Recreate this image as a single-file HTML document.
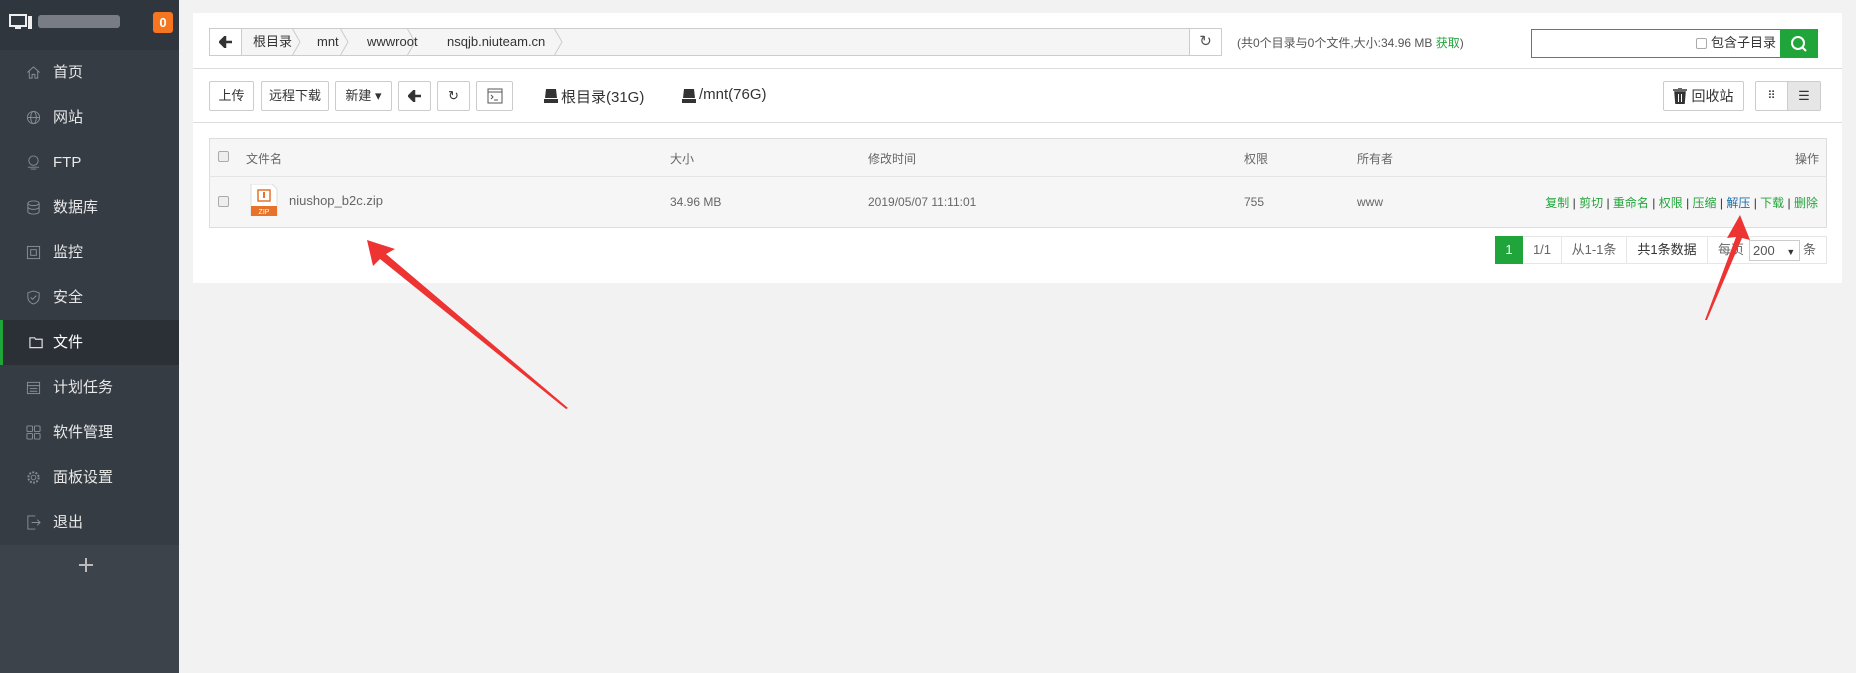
<!DOCTYPE html>
<html><head><meta charset="utf-8"><style>
*{box-sizing:border-box;margin:0;padding:0}
body{width:1856px;height:673px;background:#f2f2f2;font-family:"Liberation Sans","Noto Sans CJK SC",sans-serif;position:relative;overflow:hidden;color:#555}
.side{position:absolute;left:0;top:0;width:179px;height:673px;background:#3c434b}
.hd{position:absolute;left:0;top:0;width:179px;height:50px;background:#30363e}
.menu{position:absolute;left:0;top:50px;width:179px;height:495px;background:#353c44}
.mi{position:absolute;left:0;width:179px;height:45px;color:#e8e8e8;font-size:15px;line-height:45px;padding-left:53px}
.mi.act{background:#2b3037;border-left:3px solid #20a53a;padding-left:50px;color:#fff}
.ic{position:absolute;left:26px;top:15px;width:15px;height:15px}
.a{position:absolute}
.panel{position:absolute;left:193px;top:13px;width:1649px;height:270px;background:#fff}
.btn{position:absolute;top:81px;height:30px;border:1px solid #ccc;border-radius:2px;background:#fff;font-size:13px;line-height:28px;text-align:center;color:#333}
.crumb{position:absolute;top:28px;height:28px;font-size:13px;line-height:28px;color:#333}
.t{position:absolute;font-size:12px;color:#666}
.lk{color:#20a53a}
</style></head><body>
<div class="side"></div>
<div class="hd">
<svg class="a" style="left:9px;top:14px" width="24" height="17" viewBox="0 0 24 17"><rect x="1" y="1" width="16" height="11" fill="none" stroke="#eee" stroke-width="2"/><rect x="6" y="13" width="6" height="2" fill="#eee"/><rect x="19" y="2" width="4" height="13" fill="#eee"/></svg>
<div class="a" style="left:38px;top:15px;width:82px;height:13px;background:#8b9097;border-radius:3px;opacity:.8"></div>
<div class="a" style="left:153px;top:12px;width:20px;height:21px;background:#f6751f;border-radius:3px;color:#fff;font-size:13px;font-weight:bold;text-align:center;line-height:21px">0</div>
</div>
<div class="menu"></div>
<div class="mi" style="top:50px"><svg class="ic" viewBox="0 0 16 16"><path d="M1.5 8L8 2l6.5 6M3.5 6.5V14h3v-4h3v4h3V6.5" fill="none" stroke="#8a9096"/></svg>首页</div>
<div class="mi" style="top:95px"><svg class="ic" viewBox="0 0 16 16"><circle cx="8" cy="8" r="6.5" fill="none" stroke="#8a9096"/><ellipse cx="8" cy="8" rx="3" ry="6.5" fill="none" stroke="#8a9096"/><path d="M2 8h12" stroke="#8a9096"/></svg>网站</div>
<div class="mi" style="top:140px"><svg class="ic" viewBox="0 0 16 16"><circle cx="8" cy="6" r="5" fill="none" stroke="#8a9096"/><path d="M2 13h12M5 15h6" stroke="#8a9096"/></svg>FTP</div>
<div class="mi" style="top:185px"><svg class="ic" viewBox="0 0 16 16"><ellipse cx="8" cy="3.5" rx="6" ry="2.5" fill="none" stroke="#8a9096"/><path d="M2 3.5v9c0 1.4 2.7 2.5 6 2.5s6-1.1 6-2.5v-9M2 7.5c0 1.4 2.7 2.5 6 2.5s6-1.1 6-2.5" fill="none" stroke="#8a9096"/></svg>数据库</div>
<div class="mi" style="top:230px"><svg class="ic" viewBox="0 0 16 16"><rect x="1.5" y="1.5" width="13" height="13" fill="none" stroke="#8a9096"/><rect x="5" y="5" width="6" height="6" fill="none" stroke="#8a9096"/></svg>监控</div>
<div class="mi" style="top:275px"><svg class="ic" viewBox="0 0 16 16"><path d="M8 1l6 2v5c0 3.5-3 6-6 7-3-1-6-3.5-6-7V3z" fill="none" stroke="#8a9096"/><path d="M5 8l2 2 4-4" fill="none" stroke="#8a9096"/></svg>安全</div>
<div class="mi act" style="top:320px"><svg class="ic" viewBox="0 0 16 16"><path d="M1 3h5l1 1.5h7v9H1z" fill="none" stroke="#ddd" stroke-width="1.3"/></svg>文件</div>
<div class="mi" style="top:365px"><svg class="ic" viewBox="0 0 16 16"><rect x="1.5" y="2.5" width="13" height="12" fill="none" stroke="#8a9096"/><path d="M1.5 6h13M4 9h8M4 12h8" stroke="#8a9096"/></svg>计划任务</div>
<div class="mi" style="top:410px"><svg class="ic" viewBox="0 0 16 16"><rect x="1" y="1" width="6" height="6" rx="1" fill="none" stroke="#8a9096"/><rect x="9" y="1" width="6" height="6" rx="1" fill="none" stroke="#8a9096"/><rect x="1" y="9" width="6" height="6" rx="1" fill="none" stroke="#8a9096"/><rect x="9" y="9" width="6" height="6" rx="1" fill="none" stroke="#8a9096"/></svg>软件管理</div>
<div class="mi" style="top:455px"><svg class="ic" viewBox="0 0 16 16"><circle cx="8" cy="8" r="5.5" fill="none" stroke="#8a9096" stroke-dasharray="2 1.5" stroke-width="2"/><circle cx="8" cy="8" r="2.5" fill="none" stroke="#8a9096"/></svg>面板设置</div>
<div class="mi" style="top:500px"><svg class="ic" viewBox="0 0 16 16"><path d="M10 1H2v14h8M6 8h9M12 5l3 3-3 3" fill="none" stroke="#8a9096"/></svg>退出</div>
<svg class="a" style="left:79px;top:558px" width="14" height="14"><path d="M7 0v14M0 7h14" stroke="#bbb" stroke-width="2"/></svg>

<div class="panel"></div>
<!-- breadcrumb -->
<div class="a" style="left:209px;top:28px;width:1013px;height:28px;border:1px solid #ccc;background:#f5f5f5"></div>
<div class="a" style="left:209px;top:28px;width:33px;height:28px;border:1px solid #ccc;background:#fff"></div>
<svg class="a" style="left:219px;top:36px" width="14" height="12"><path d="M13 6H5M6 1L1 6l5 5z" stroke="#333" stroke-width="2.5" fill="#333"/></svg>
<div class="crumb" style="left:253px">根目录</div>
<div class="crumb" style="left:317px">mnt</div>
<div class="crumb" style="left:367px">wwwroot</div>
<div class="crumb" style="left:447px">nsqjb.niuteam.cn</div>
<svg class="a" style="left:242px;top:28px" width="330" height="28"><g fill="none" stroke="#ccc"><path d="M50 0l8 14-8 14M98 0l8 14-8 14M165 0l8 14-8 14M312 0l8 14-8 14"/></g></svg>
<div class="a" style="left:1189px;top:28px;width:33px;height:28px;border:1px solid #ccc;background:#fff;text-align:center;line-height:26px;font-size:15px;color:#555">↻</div>
<div class="t" style="left:1237px;top:34px;font-size:12px;color:#555">(共0个目录与0个文件,大小:34.96 MB <span class="lk">获取</span>)</div>
<div class="a" style="left:1531px;top:29px;width:250px;height:29px;border:1px solid #20a53a"></div>
<div class="a" style="left:1696px;top:38px;width:11px;height:11px;border:1px solid #aaa;border-radius:2px"></div>
<div class="t" style="left:1711px;top:34px;font-size:13px;line-height:18px;color:#333">包含子目录</div>
<div class="a" style="left:1780px;top:29px;width:38px;height:29px;background:#20a53a"></div>
<svg class="a" style="left:1789px;top:34px" width="20" height="20"><circle cx="9" cy="9" r="6" fill="none" stroke="#fff" stroke-width="2"/><path d="M13 13l4 4" stroke="#fff" stroke-width="2"/></svg>
<div class="a" style="left:193px;top:68px;width:1649px;height:1px;background:#ddd"></div>
<!-- toolbar -->
<div class="btn" style="left:209px;width:45px">上传</div>
<div class="btn" style="left:261px;width:68px">远程下载</div>
<div class="btn" style="left:335px;width:57px">新建 ▾</div>
<div class="btn" style="left:398px;width:33px"><svg width="14" height="12" style="margin-top:8px"><path d="M13 6H5M6 1L1 6l5 5z" stroke="#333" stroke-width="2.5" fill="#333"/></svg></div>
<div class="btn" style="left:437px;width:33px">↻</div>
<div class="btn" style="left:476px;width:37px"><svg width="16" height="16" style="margin-top:6px" viewBox="0 0 16 16"><rect x="1" y="1" width="14" height="14" fill="none" stroke="#555"/><path d="M1 4h14M4 7l2 2-2 2M7 12h4" fill="none" stroke="#555"/></svg></div>
<svg class="a" style="left:544px;top:89px" width="14" height="14"><path d="M2 0h10l1 9H1z" fill="#333"/><rect x="0" y="10" width="14" height="4" fill="#333"/></svg>
<div class="t" style="left:561px;top:86px;font-size:15px;color:#333">根目录(31G)</div>
<svg class="a" style="left:682px;top:89px" width="14" height="14"><path d="M2 0h10l1 9H1z" fill="#333"/><rect x="0" y="10" width="14" height="4" fill="#333"/></svg>
<div class="t" style="left:699px;top:86px;font-size:15px;color:#333">/mnt(76G)</div>
<div class="btn" style="left:1663px;width:81px;font-size:14px;padding-left:18px">回收站</div>
<svg class="a" style="left:1673px;top:88px" width="14" height="16"><path d="M0 2h14M5 0h4M2 4h10l-1 12H3z" stroke="#333" fill="#333" stroke-width="1.5"/><path d="M5.5 6v8M8.5 6v8" stroke="#fff"/></svg>
<div class="btn" style="left:1755px;width:33px;border-radius:2px 0 0 2px;font-size:11px">⠿</div>
<div class="btn" style="left:1787px;width:34px;background:#e6e6e6;font-size:13px">☰</div>
<div class="a" style="left:193px;top:122px;width:1649px;height:1px;background:#ddd"></div>
<!-- table -->
<div class="a" style="left:209px;top:138px;width:1618px;height:90px;border:1px solid #ddd;background:#f6f6f6"></div>
<div class="a" style="left:209px;top:176px;width:1618px;height:1px;background:#e4e4e4"></div>
<div class="a" style="left:218px;top:151px;width:11px;height:11px;border:1px solid #aaa;border-radius:2px;background:#eee"></div>
<div class="a" style="left:218px;top:196px;width:11px;height:11px;border:1px solid #aaa;border-radius:2px;background:#eee"></div>
<div class="t" style="left:246px;top:150px">文件名</div>
<div class="t" style="left:670px;top:150px">大小</div>
<div class="t" style="left:868px;top:150px">修改时间</div>
<div class="t" style="left:1244px;top:150px">权限</div>
<div class="t" style="left:1357px;top:150px">所有者</div>
<div class="t" style="left:1795px;top:150px">操作</div>
<svg class="a" style="left:250px;top:184px" width="28" height="32"><path d="M1 0h21l5 5v27H1z" fill="#fff" stroke="#ddd"/><rect x="1" y="22" width="26" height="10" fill="#e8722a"/><rect x="8" y="6" width="12" height="11" fill="none" stroke="#e8722a" stroke-width="1.5"/><rect x="13" y="8" width="2" height="6" fill="#e8722a"/><text x="14" y="30" font-size="7" fill="#fff" text-anchor="middle" font-family="Liberation Sans">ZIP</text></svg>
<div class="t" style="left:289px;top:193px;font-size:13px">niushop_b2c.zip</div>
<div class="t" style="left:670px;top:195px">34.96 MB</div>
<div class="t" style="left:868px;top:195px">2019/05/07 11:11:01</div>
<div class="t" style="left:1244px;top:195px">755</div>
<div class="t" style="left:1357px;top:195px">www</div>
<div class="t" style="right:38px;top:194px;color:#333"><span class="lk">复制</span> | <span class="lk">剪切</span> | <span class="lk">重命名</span> | <span class="lk">权限</span> | <span class="lk">压缩</span> | <span style="color:#1a6ea8">解压</span> | <span class="lk">下载</span> | <span class="lk">删除</span></div>
<!-- pagination -->
<div class="a" style="left:1495px;top:236px;width:332px;height:28px;border:1px solid #e6e6e6"></div>
<div class="a" style="left:1495px;top:236px;width:28px;height:28px;background:#20a53a;color:#fff;font-size:13px;text-align:center;line-height:28px">1</div>
<div class="t" style="left:1523px;top:236px;width:39px;height:28px;line-height:28px;text-align:center;border-right:1px solid #e6e6e6;font-size:13px">1/1</div>
<div class="t" style="left:1562px;top:236px;width:65px;height:28px;line-height:28px;text-align:center;border-right:1px solid #e6e6e6;font-size:13px">从1-1条</div>
<div class="t" style="left:1627px;top:236px;width:81px;height:28px;line-height:28px;text-align:center;border-right:1px solid #e6e6e6;font-size:13px;color:#333">共1条数据</div>
<div class="t" style="left:1718px;top:236px;line-height:28px;font-size:13px">每页</div>
<div class="a" style="left:1749px;top:240px;width:51px;height:21px;border:1px solid #ccc;font-size:13px;line-height:19px;padding-left:3px;color:#555">200 <span style="font-size:9px;margin-left:8px;color:#333">▼</span></div>
<div class="t" style="left:1803px;top:236px;line-height:28px;font-size:13px">条</div>
<!-- arrows -->
<svg class="a" style="left:0;top:0" width="1856" height="673"><polygon points="367,240 395,249 386,254 568,408 566,409 380,259 373,266" fill="#ee3333"/><polygon points="1740,215 1750,240 1742,238 1707,320 1705,320 1736,237 1727,238" fill="#ee3333"/></svg>
</body></html>
